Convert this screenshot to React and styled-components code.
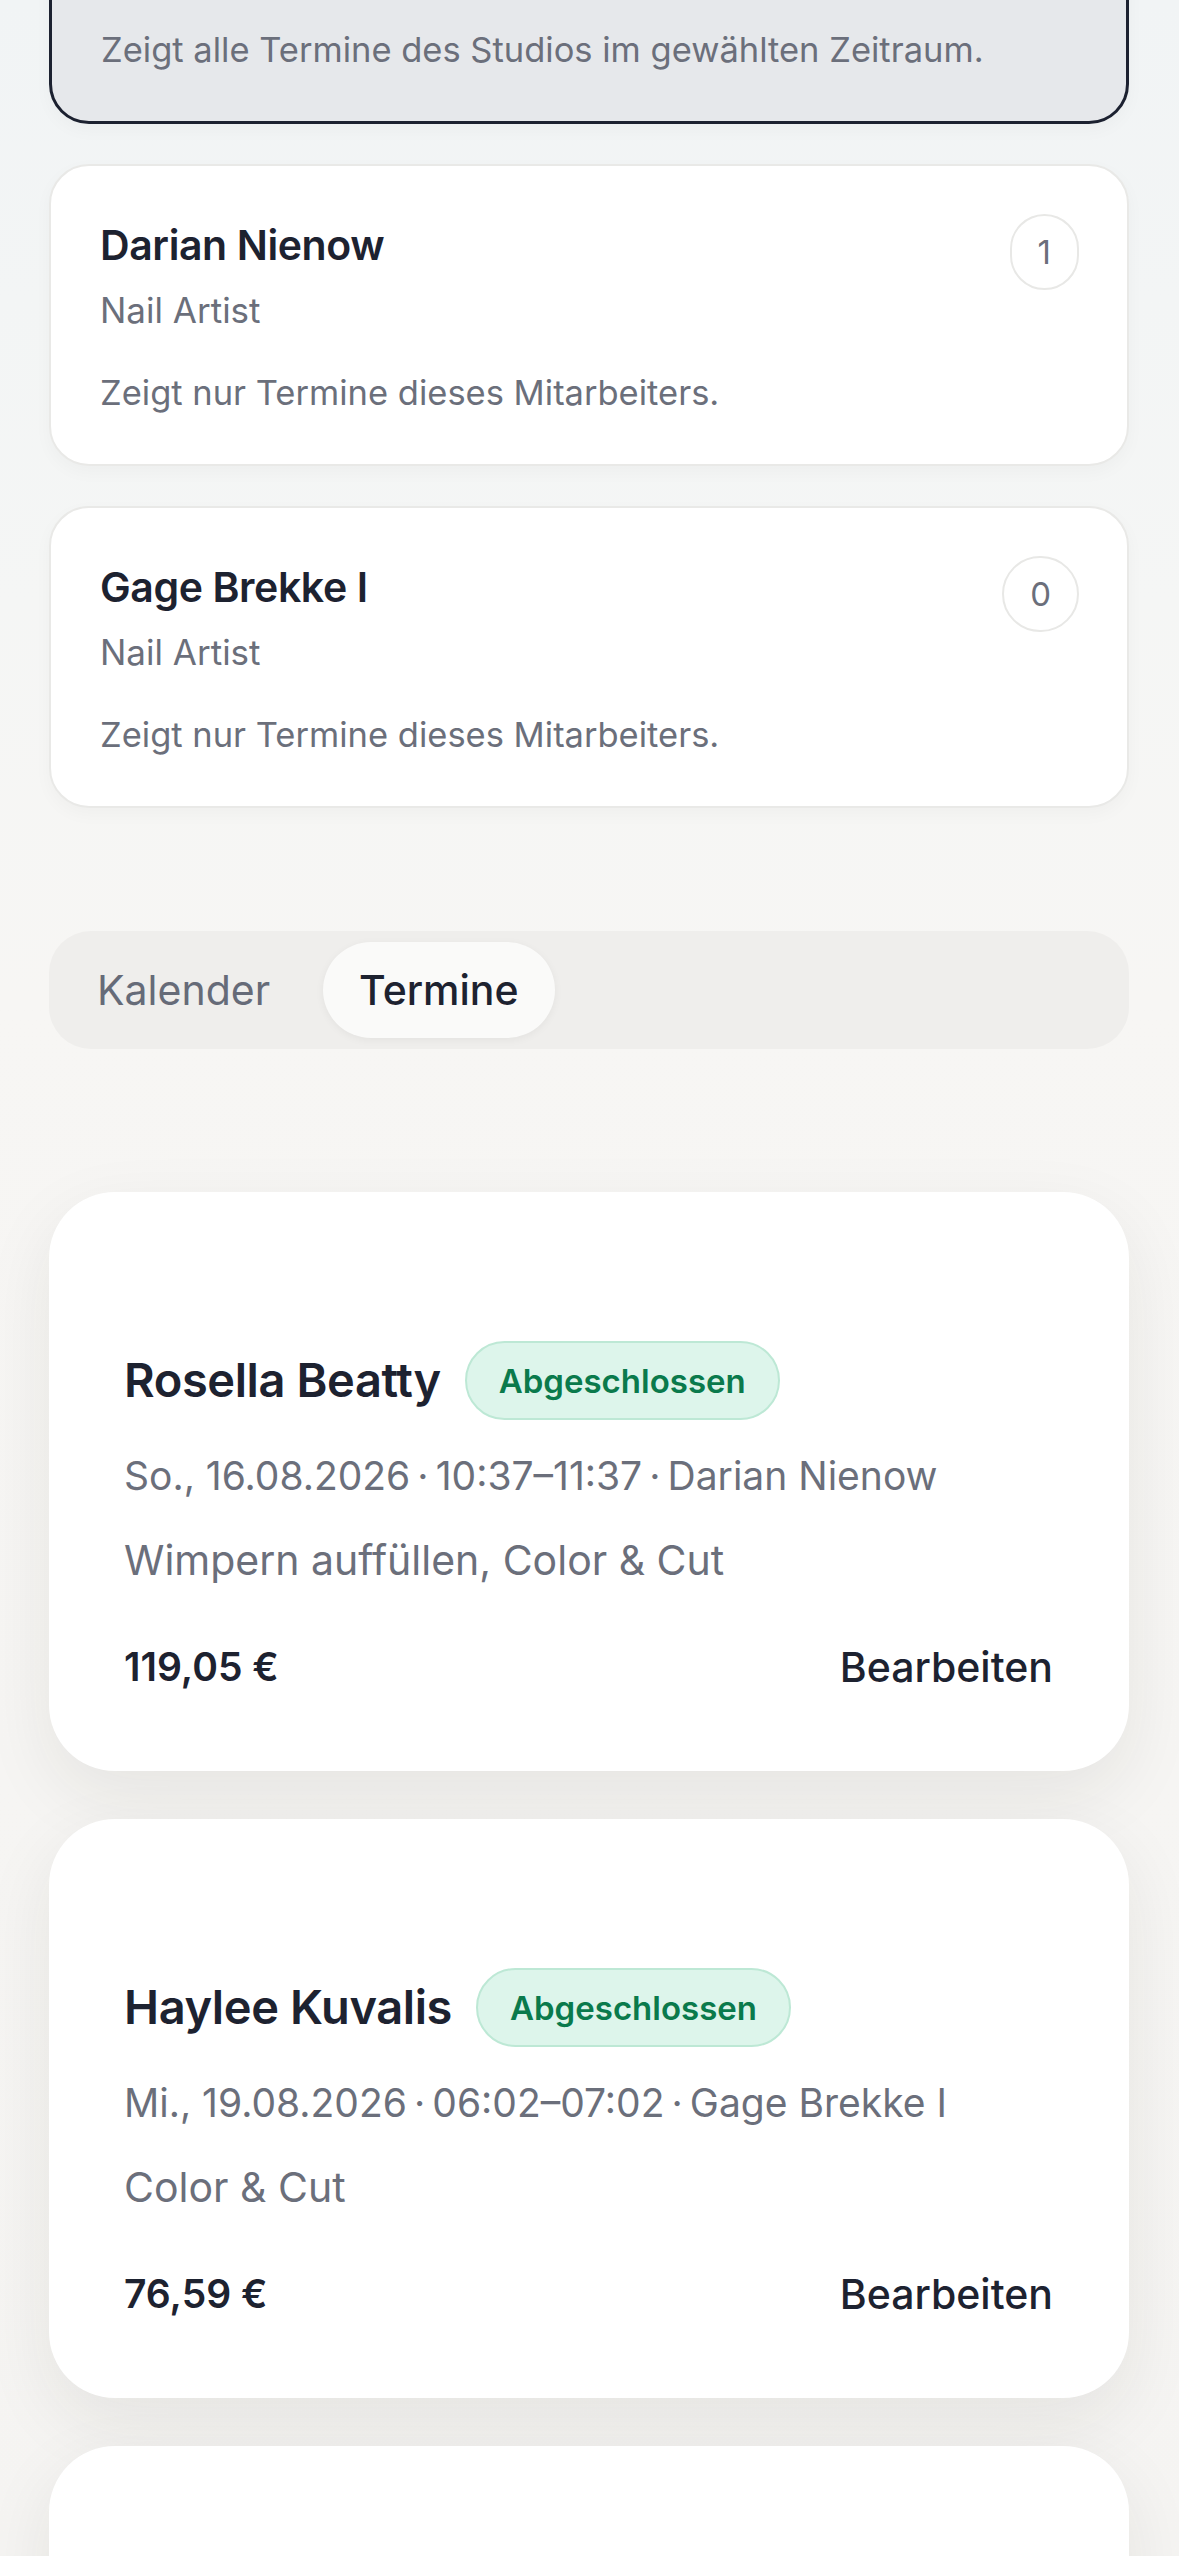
import React from "react";
import styled, { createGlobalStyle } from "styled-components";

const staff = [
  { id: "all", name: "Alle Mitarbeiter", role: "Studio", count: 2, hint: "Zeigt alle Termine des Studios im gewählten Zeitraum.", selected: true },
  { id: "darian", name: "Darian Nienow", role: "Nail Artist", count: 1, hint: "Zeigt nur Termine dieses Mitarbeiters." },
  { id: "gage", name: "Gage Brekke I", role: "Nail Artist", count: 0, hint: "Zeigt nur Termine dieses Mitarbeiters." },
];

const appointments = [
  {
    id: 1,
    client: "Rosella Beatty",
    status: "Abgeschlossen",
    date: "So., 16.08.2026",
    time: "10:37–11:37",
    staff: "Darian Nienow",
    services: "Wimpern auffüllen, Color & Cut",
    price: "119,05 €",
  },
  {
    id: 2,
    client: "Haylee Kuvalis",
    status: "Abgeschlossen",
    date: "Mi., 19.08.2026",
    time: "06:02–07:02",
    staff: "Gage Brekke I",
    services: "Color & Cut",
    price: "76,59 €",
  },
  {
    id: 3,
    client: "Jaylen Schowalter",
    status: "Abgeschlossen",
    date: "Do., 20.08.2026",
    time: "14:15–15:15",
    staff: "Darian Nienow",
    services: "Maniküre",
    price: "54,20 €",
  },
];

const sep = "\u2009·\u2009";

const App = () => {
  return (
    <>
      <GlobalStyle />
      <Page>
        <StaffList>
          {staff.map((s) => (
            <StaffCard key={s.id} $selected={s.selected}>
              <StaffHeader>
                <div>
                  <StaffName>{s.name}</StaffName>
                  <StaffRole>{s.role}</StaffRole>
                </div>
                <CountPill>{s.count}</CountPill>
              </StaffHeader>
              <StaffHint>{s.hint}</StaffHint>
            </StaffCard>
          ))}
        </StaffList>

        <Tabs>
          <Tab>Kalender</Tab>
          <Tab $active>Termine</Tab>
        </Tabs>

        <AppointmentList>
          {appointments.map((a) => (
            <AppointmentCard key={a.id}>
              <CardHead>
                <ClientName>{a.client}</ClientName>
                <StatusBadge>{a.status}</StatusBadge>
              </CardHead>
              <MetaLine>
                {a.date}
                {sep}
                {a.time}
                {sep}
                {a.staff}
              </MetaLine>
              <ServiceLine>{a.services}</ServiceLine>
              <CardFoot>
                <Price>{a.price}</Price>
                <EditButton>Bearbeiten</EditButton>
              </CardFoot>
            </AppointmentCard>
          ))}
        </AppointmentList>
      </Page>
    </>
  );
};

export default App;

const GlobalStyle = createGlobalStyle`
  html, body {
    margin: 0;
    padding: 0;
  }

  body {
    font-family: Inter, "Noto Sans", "Liberation Sans", sans-serif;
    color: #1d2230;
    background: linear-gradient(180deg, #f1f4f5 0px, #f5f6f5 600px, #f7f6f4 1000px, #f5f4f2 2556px);
    min-height: 2556px;
    overflow-x: hidden;
    -webkit-font-smoothing: antialiased;
  }

  button {
    font-family: inherit;
  }
`;

const Page = styled.main`
  padding: 0 50px 200px 49px;
  margin-top: -180px;
`;

const StaffList = styled.section`
  display: flex;
  flex-direction: column;
  gap: 40px;
`;

const StaffCard = styled.div`
  background: ${(p) => (p.$selected ? "#e6e8eb" : "#ffffff")};
  border: ${(p) => (p.$selected ? "3px solid #1c2130" : "2px solid #e9e9e7")};
  border-radius: 40px;
  padding: 48px 48px 48px 49px;
  box-shadow: 0 6px 18px rgba(30, 30, 40, 0.03);
`;

const StaffHeader = styled.div`
  display: flex;
  justify-content: space-between;
  align-items: flex-start;
`;

const StaffName = styled.h3`
  margin: 0;
  font-size: 41px;
  font-weight: 600;
  line-height: 62px;
  letter-spacing: -0.4px;
  color: #1d2230;
`;

const StaffRole = styled.p`
  margin: 12px 0 0;
  font-size: 35px;
  line-height: 45px;
  color: #6b6f7b;
`;

const CountPill = styled.span`
  display: inline-flex;
  align-items: center;
  justify-content: center;
  height: 76px;
  padding: 0 26px;
  box-sizing: border-box;
  border: 2px solid #e8e8e6;
  border-radius: 999px;
  font-size: 33px;
  color: #6b6f7b;
`;

const StaffHint = styled.p`
  margin: 37px 0 0;
  font-size: 34.5px;
  line-height: 46px;
  color: #6b6f7b;
`;

const Tabs = styled.nav`
  display: flex;
  gap: 17px;
  margin-top: 123px;
  padding: 11px 12px;
  background: #efeeec;
  border-radius: 42px;
`;

const Tab = styled.button`
  height: 96px;
  padding: 0 36px;
  border: none;
  border-radius: 48px;
  font-size: 41px;
  font-weight: ${(p) => (p.$active ? 500 : 400)};
  color: ${(p) => (p.$active ? "#1d2230" : "#666b78")};
  background: ${(p) => (p.$active ? "#fafaf9" : "transparent")};
  box-shadow: ${(p) => (p.$active ? "0 2px 8px rgba(0, 0, 0, 0.05)" : "none")};
  cursor: pointer;
`;

const AppointmentList = styled.section`
  display: flex;
  flex-direction: column;
  gap: 48px;
  margin-top: 143px;
`;

const AppointmentCard = styled.article`
  background: #ffffff;
  border-radius: 66px;
  padding: 149px 76px 76px 75px;
  box-shadow: 0 24px 70px rgba(40, 35, 30, 0.08);
`;

const CardHead = styled.div`
  display: flex;
  align-items: center;
  gap: 24px;
  min-height: 79px;
`;

const ClientName = styled.h2`
  margin: 0;
  font-size: 47px;
  font-weight: 600;
  line-height: 1.2;
  letter-spacing: -0.4px;
  color: #1d2230;
`;

const StatusBadge = styled.span`
  display: inline-flex;
  align-items: center;
  height: 79px;
  box-sizing: border-box;
  padding: 0 32px;
  border: 2px solid #bde8d5;
  border-radius: 999px;
  background: #ddf5eb;
  color: #0a7a4c;
  font-size: 33px;
  font-weight: 600;
`;

const MetaLine = styled.p`
  margin: 27px 0 0;
  font-size: 39px;
  line-height: 57px;
  color: #6b6f7b;
`;

const ServiceLine = styled(MetaLine)`
  margin-top: 28px;
  font-size: 41px;
`;

const CardFoot = styled.div`
  display: flex;
  justify-content: space-between;
  align-items: center;
  margin-top: 50px;
  line-height: 56px;
`;

const Price = styled.span`
  font-size: 39px;
  font-weight: 600;
  color: #1d2230;
`;

const EditButton = styled.button`
  padding: 0;
  border: none;
  background: none;
  font-size: 41px;
  font-weight: 500;
  line-height: 56px;
  color: #1d2230;
  cursor: pointer;
`;
